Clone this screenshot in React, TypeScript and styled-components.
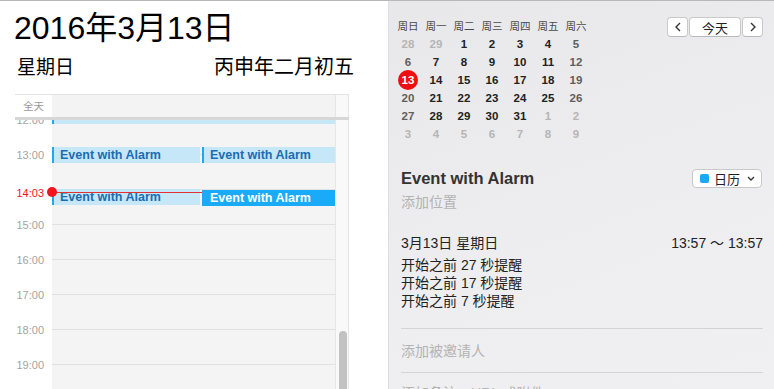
import React from 'react';
import styled, { createGlobalStyle } from 'styled-components';

const FONT = `"Liberation Sans", "Noto Sans CJK SC", sans-serif`;

const Global = createGlobalStyle`
  html, body { margin: 0; padding: 0; background: #fff; }
  body { font-family: ${FONT}; color: #222; }
`;

const Window = styled.div`
  width: 774px;
  height: 389px;
  box-sizing: border-box;
  display: flex;
  overflow: hidden;
  border-top: 1px solid #b8b8b8;
`;

/* ---------- left: day view ---------- */

const DayPane = styled.section`
  width: 388px;
  flex: none;
  display: flex;
  flex-direction: column;
  background: #fff;
  border-right: 1px solid #dedede;
`;

const DateTitle = styled.h1`
  margin: 11px 0 0 14px;
  font-size: 32px;
  line-height: 32px;
  font-weight: 400;
  color: #000;
`;

const SubRow = styled.div`
  display: flex;
  justify-content: space-between;
  align-items: center;
  margin-top: 11px;
  padding: 0 34px 0 17px;
  height: 20px;
  color: #000;
`;

const Weekday = styled.span`
  font-size: 19px;
`;

const Lunar = styled.span`
  font-size: 20px;
`;

const Grid = styled.div`
  flex: 1;
  min-height: 0;
  width: 334px;
  margin: 19px 0 0 15px;
  display: flex;
  flex-direction: column;
`;

const AllDayRow = styled.div`
  height: 23px;
  box-sizing: border-box;
  border-top: 1px solid #e3e3e3;
  display: flex;
`;

const GutterLabel = styled.div`
  width: 37px;
  flex: none;
  box-sizing: border-box;
  padding-right: 8px;
  text-align: right;
  font-size: 10.5px;
  line-height: 22px;
  color: #9a9a9a;
`;

const AllDayBody = styled.div`
  flex: 1;
  background: #f3f3f3;
`;

const Track = styled.div`
  width: 14px;
  flex: none;
  box-sizing: border-box;
  background: #f9f9f9;
  border-left: 1px solid #e6e6e6;
  border-right: 1px solid #e6e6e6;
`;

const Thumb = styled.div<{ $top: number }>`
  width: 8px;
  height: 120px;
  margin: ${(p) => p.$top}px 0 0 3px;
  border-radius: 4px;
  background: #c2c2c2;
`;

const Splitter = styled.div`
  height: 3px;
  flex: none;
  background: #d6d6d6;
`;

const Scroll = styled.div`
  flex: 1;
  min-height: 0;
  display: flex;
  overflow: hidden;
`;

const TimeCol = styled.div`
  width: 37px;
  flex: none;
  margin-top: -17px;
  background: #fff;
`;

const HourLabel = styled.div<{ $now?: boolean }>`
  height: 35px;
  box-sizing: border-box;
  padding-right: 8px;
  text-align: right;
  font-size: 11px;
  line-height: 35px;
  color: ${(p) => (p.$now ? '#f5141b' : '#a3a3a3')};
  transform: ${(p) => (p.$now ? 'translateY(3px)' : 'none')};
`;

const DayCol = styled.div`
  flex: 1;
  position: relative;
  background: #f4f4f4;
`;

const HourLines = styled.div`
  margin-top: -1px;
`;

const HourSlot = styled.div`
  height: 35px;
  box-sizing: border-box;
  border-top: 1px solid #e1e1e1;
`;

const EventBlock = styled.div<{ $selected?: boolean }>`
  position: absolute;
  box-sizing: border-box;
  padding-left: 6px;
  border-left: 2px solid #1ca8f4;
  background: ${(p) => (p.$selected ? '#1aabf8' : '#c6e7f8')};
  color: ${(p) => (p.$selected ? '#fff' : '#1b6cb2')};
  font-size: 12.5px;
  font-weight: 700;
  line-height: 16px;
  white-space: nowrap;
  overflow: hidden;
  z-index: ${(p) => (p.$selected ? 3 : 1)};
`;

const NowLine = styled.div`
  position: absolute;
  left: 0;
  width: 151px;
  height: 1px;
  background: #e0322f;
  z-index: 2;
`;

const NowDot = styled.div`
  position: absolute;
  left: -5px;
  width: 10px;
  height: 10px;
  border-radius: 50%;
  background: #f5141b;
  z-index: 4;
`;

/* ---------- right: inspector ---------- */

const SidePane = styled.section`
  flex: 1;
  display: flex;
  flex-direction: column;
  background: linear-gradient(160deg, #e8e8ea 0%, #eeeef0 60%, #f0f0f2 100%);
`;

const TopRow = styled.div`
  display: flex;
  justify-content: space-between;
  align-items: flex-start;
  padding: 16px 11px 0 5px;
`;

const MiniCal = styled.div`
  display: grid;
  grid-template-columns: repeat(7, 28px);
  grid-auto-rows: 18px;
`;

const WeekHead = styled.div`
  text-align: center;
  font-size: 10.5px;
  line-height: 18px;
  color: #4a4a4a;
`;

type Tone = 'dim' | 'weekend' | 'normal';

const DayNum = styled.div<{ $tone: Tone }>`
  display: flex;
  align-items: center;
  justify-content: center;
  font-size: 11.5px;
  font-weight: 700;
  color: ${(p) => (p.$tone === 'dim' ? '#b5b5b5' : p.$tone === 'weekend' ? '#5e5e5e' : '#222')};
`;

const TodayMark = styled.span`
  width: 20px;
  height: 20px;
  border-radius: 50%;
  background: #f10e0e;
  color: #fff;
  display: flex;
  align-items: center;
  justify-content: center;
`;

const Nav = styled.div`
  display: flex;
  gap: 1px;
`;

const NavBtn = styled.button<{ $w: number }>`
  width: ${(p) => p.$w}px;
  height: 20px;
  box-sizing: border-box;
  padding: 0;
  border: 1px solid #c9c9c9;
  border-bottom-color: #b9b9b9;
  border-radius: 4px;
  background: #fff;
  font-family: ${FONT};
  font-size: 13px;
  color: #222;
  display: flex;
  align-items: center;
  justify-content: center;
`;

const Details = styled.div`
  display: flex;
  flex-direction: column;
  padding: 0 11px 0 12px;
`;

const TitleRow = styled.div`
  display: flex;
  justify-content: space-between;
  align-items: center;
  height: 20px;
  margin-top: 25px;
`;

const EventTitle = styled.div`
  font-size: 16.5px;
  font-weight: 700;
  color: #333;
`;

const CalSelect = styled.div`
  width: 70px;
  height: 19px;
  box-sizing: border-box;
  margin-right: 1px;
  padding: 0 6px 0 7px;
  border: 1px solid #c8c8c8;
  border-radius: 4px;
  background: #fff;
  display: flex;
  align-items: center;
  font-size: 13px;
  color: #222;
`;

const Swatch = styled.span`
  width: 9px;
  height: 9px;
  margin-right: 5px;
  border-radius: 2px;
  background: #1ba8f4;
`;

const Placeholder = styled.div<{ $gap: number }>`
  margin-top: ${(p) => p.$gap}px;
  font-size: 14px;
  line-height: 18px;
  color: #b3b3b3;
`;

const WhenRow = styled.div`
  display: flex;
  justify-content: space-between;
  margin: 23px 0 4px;
  font-size: 14px;
  line-height: 18px;
  color: #222;
`;

const Alarm = styled.div`
  font-size: 14px;
  line-height: 18px;
  color: #222;
`;

const Rule = styled.div<{ $gap: number }>`
  height: 1px;
  margin-top: ${(p) => p.$gap}px;
  background: #d4d4d4;
`;

/* ---------- data ---------- */

const hours = ['12:00', '13:00', '14:03', '15:00', '16:00', '17:00', '18:00', '19:00', '20:00'];

const events = [
  { top: -30, height: 34, left: 0, width: 283 },
  { top: 27, height: 16, left: 0, width: 148 },
  { top: 27, height: 16, left: 150, width: 133 },
  { top: 69, height: 16, left: 0, width: 148 },
  { top: 70, height: 16, left: 150, width: 133, selected: true },
];

const heads = ['周日', '周一', '周二', '周三', '周四', '周五', '周六'];

const weeks: number[][] = [
  [28, 29, 1, 2, 3, 4, 5],
  [6, 7, 8, 9, 10, 11, 12],
  [13, 14, 15, 16, 17, 18, 19],
  [20, 21, 22, 23, 24, 25, 26],
  [27, 28, 29, 30, 31, 1, 2],
  [3, 4, 5, 6, 7, 8, 9],
];

function toneOf(row: number, col: number, d: number): Tone {
  const outside = (row === 0 && d > 20) || (row >= 4 && d < 15);
  if (outside) return 'dim';
  if (col === 0 || col === 6) return 'weekend';
  return 'normal';
}

const Chevron = ({ dir }: { dir: 'left' | 'right' | 'down' }) => {
  if (dir === 'down') {
    return (
      <svg width="8" height="5" viewBox="0 0 8 5" style={{ marginLeft: 'auto' }}>
        <path d="M1 1l3 3 3-3" fill="none" stroke="#333" strokeWidth="1.3" />
      </svg>
    );
  }
  return (
    <svg width="6" height="10" viewBox="0 0 6 10">
      <path
        d={dir === 'left' ? 'M5 1L1 5l4 4' : 'M1 1l4 4-4 4'}
        fill="none"
        stroke="#333"
        strokeWidth="1.4"
      />
    </svg>
  );
};

export default function App() {
  return (
    <>
      <Global />
      <Window>
        <DayPane>
          <DateTitle>2016年3月13日</DateTitle>
          <SubRow>
            <Weekday>星期日</Weekday>
            <Lunar>丙申年二月初五</Lunar>
          </SubRow>
          <Grid>
            <AllDayRow>
              <GutterLabel>全天</GutterLabel>
              <AllDayBody />
              <Track />
            </AllDayRow>
            <Splitter />
            <Scroll>
              <TimeCol>
                {hours.map((h) => (
                  <HourLabel key={h} $now={h === '14:03'}>
                    {h}
                  </HourLabel>
                ))}
              </TimeCol>
              <DayCol>
                <HourLines>
                  {hours.map((h) => (
                    <HourSlot key={h} />
                  ))}
                </HourLines>
                {events.map((e, i) => (
                  <EventBlock
                    key={i}
                    $selected={e.selected}
                    style={{ top: e.top, height: e.height, left: e.left, width: e.width }}
                  >
                    {i > 0 && 'Event with Alarm'}
                  </EventBlock>
                ))}
                <NowLine style={{ top: 72 }} />
                <NowDot style={{ top: 67 }} />
              </DayCol>
              <Track>
                <Thumb $top={211} />
              </Track>
            </Scroll>
          </Grid>
        </DayPane>

        <SidePane>
          <TopRow>
            <MiniCal>
              {heads.map((h) => (
                <WeekHead key={h}>{h}</WeekHead>
              ))}
              {weeks.map((w, r) =>
                w.map((d, c) => (
                  <DayNum key={`${r}-${c}`} $tone={toneOf(r, c, d)}>
                    {r === 2 && c === 0 ? <TodayMark>{d}</TodayMark> : d}
                  </DayNum>
                ))
              )}
            </MiniCal>
            <Nav>
              <NavBtn $w={21}>
                <Chevron dir="left" />
              </NavBtn>
              <NavBtn $w={52}>今天</NavBtn>
              <NavBtn $w={21}>
                <Chevron dir="right" />
              </NavBtn>
            </Nav>
          </TopRow>

          <Details>
            <TitleRow>
              <EventTitle>Event with Alarm</EventTitle>
              <CalSelect>
                <Swatch />
                日历
                <Chevron dir="down" />
              </CalSelect>
            </TitleRow>
            <Placeholder $gap={5}>添加位置</Placeholder>
            <WhenRow>
              <span>3月13日 星期日</span>
              <span>13:57 ～ 13:57</span>
            </WhenRow>
            <Alarm>开始之前 27 秒提醒</Alarm>
            <Alarm>开始之前 17 秒提醒</Alarm>
            <Alarm>开始之前 7 秒提醒</Alarm>
            <Rule $gap={18} />
            <Placeholder $gap={13}>添加被邀请人</Placeholder>
            <Rule $gap={12} />
            <Placeholder $gap={11}>添加备注、URL 或附件</Placeholder>
          </Details>
        </SidePane>
      </Window>
    </>
  );
}
